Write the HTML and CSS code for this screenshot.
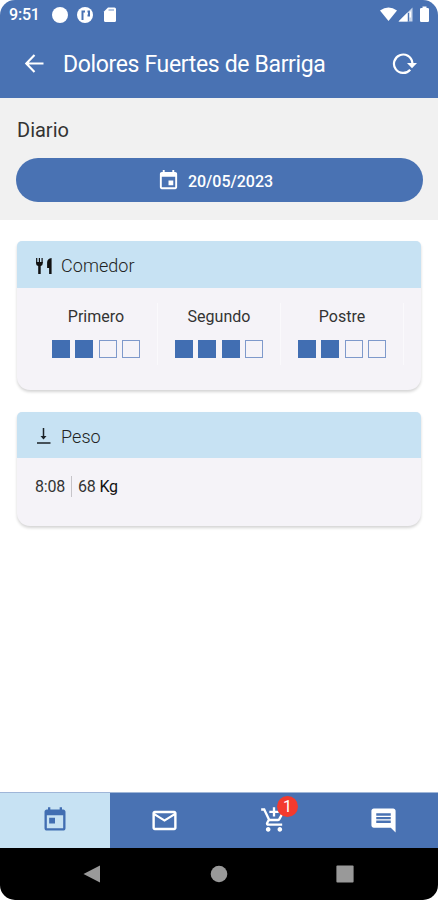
FILE: index.html
```html
<!DOCTYPE html>
<html lang="es">
<head>
<meta charset="utf-8">
<title>Diario</title>
<link rel="stylesheet" href="styles.css">
</head>
<body>
<div class="phone">
  <div class="status">
    <span class="clock">9:51</span>
    <svg class="notifications" width="70" height="18" viewBox="0 0 70 18" fill="#fff">
      <circle cx="10" cy="9" r="8"/>
      <circle cx="35" cy="9" r="8"/>
      <path d="M32.500 14V5.500H35M37.500 5.500h1.500v4h-1.500" fill="none" stroke="#4972b3" stroke-width="2"/>
      <path d="M58 1.500h6.500A1.500 1.500 0 0 1 66 3v11.500a1.500 1.500 0 0 1-1.500 1.500h-9a1.500 1.500 0 0 1-1.500-1.500V5.500z"/>
      <path d="M58.500 4h5.500" stroke="#9db5d8" stroke-width="1.300"/>
    </svg>
    <svg class="signals" width="54" height="18" viewBox="0 0 54 18" fill="#fff">
      <path d="M0 4.500Q8.500-1.500 17 4.500L8.500 15z"/>
      <path d="M18.500 15.500L32.500 1.500v14z" fill="#c6d3e9"/>
      <path d="M18.500 15.500L27.500 6.500v9zM29.500 5.500h1.500v6h-1.500z"/>
      <path d="M28.500 7v8.500" stroke="#4972b3" stroke-width="1.200"/>
      <path d="M42.500 2V.5h4V2H47.800A1.200 1.200 0 0 1 49 3.200v11.600a1.200 1.200 0 0 1-1.200 1.200h-6.600a1.200 1.200 0 0 1-1.200-1.200V3.200A1.200 1.200 0 0 1 41.200 2z"/>
    </svg>
  </div>
  <header class="appbar">
    <svg class="back" width="27" height="27" viewBox="0 0 24 24"><path d="M20 12H5M12 4.500L4.700 12l7.300 7.500" fill="none" stroke="#fff" stroke-width="1.900"/></svg>
    <h1>Dolores Fuertes de Barriga</h1>
    <svg class="refresh" width="26" height="24" viewBox="0 0 26 24"><path d="M18.200 17.700A9.200 9.200 0 1 1 20.300 10.500V12" fill="none" stroke="#fff" stroke-width="2.200"/><path d="M15 11h10L20 16.300z" fill="#fff"/></svg>
  </header>
  <section class="day">
    <h2>Diario</h2>
    <button class="date">
      <svg width="23" height="23" viewBox="0 0 24 24" fill="#fff"><path d="M17 12h-5v5h5v-5zM16 1v2H8V1H6v2H5c-1.110 0-1.990.9-1.990 2L3 19c0 1.100.89 2 2 2h14c1.100 0 2-.9 2-2V5c0-1.100-.9-2-2-2h-1V1h-2zm3 18H5V8h14v11z"/></svg>
      <span>20/05/2023</span>
    </button>
  </section>
  <main>
    <article class="card meals">
      <h3>
        <svg width="18" height="18" viewBox="0 0 18 18"><path d="M1.700 1v5M4.400 1v5M7.100 1v5" stroke="#111" stroke-width="1.200"/><path d="M1.100 5h6.600v1.700Q7.700 8.400 5.700 9v8H3.200V9Q1.100 8.400 1.100 6.700zM16.600 1v16h-2.500v-6h-2V5.500Q12.100 1.500 16.600 1z" fill="#111"/></svg>
        <span>Comedor</span>
      </h3>
      <div class="dishes">
        <div class="dish"><span>Primero</span><div class="marks"><i class="on"></i><i class="on"></i><i></i><i></i></div></div>
        <div class="dish"><span>Segundo</span><div class="marks"><i class="on"></i><i class="on"></i><i class="on"></i><i></i></div></div>
        <div class="dish"><span>Postre</span><div class="marks"><i class="on"></i><i class="on"></i><i></i><i></i></div></div>
      </div>
    </article>
    <article class="card weight">
      <h3>
        <svg width="18" height="18" viewBox="0 0 18 18"><path d="M8.500 1v10M2 16h13.500" stroke="#1b2227" stroke-width="1.500"/><path d="M5.500 9h6l-3 3.500z" fill="#1b2227"/></svg>
        <span>Peso</span>
      </h3>
      <p><span class="time">8:08</span><span class="amount">68 <b>Kg</b></span></p>
    </article>
  </main>
  <nav class="tabs">
    <a class="active"><svg width="28" height="28" viewBox="0 0 24 24"><path d="M19 3h-1V1h-2v2H8V1H6v2H5c-1.110 0-1.990.9-1.990 2L3 19c0 1.100.89 2 2 2h14c1.100 0 2-.9 2-2V5c0-1.100-.9-2-2-2zm0 16H5V8h14v11zM7 10h5v5H7z"/></svg></a>
    <a><svg width="29" height="29" viewBox="0 0 24 24"><path d="M22 6c0-1.100-.9-2-2-2H4c-1.100 0-2 .9-2 2v12c0 1.100.9 2 2 2h16c1.100 0 2-.9 2-2V6zm-2 0l-8 5-8-5h16zm0 12H4V8l8 5 8-5v10z"/></svg></a>
    <a><svg width="28" height="28" viewBox="0 0 24 24"><path d="M11 9h2V6h3V4h-3V1h-2v3H8v2h3v3zm-4 9c-1.100 0-1.990.9-1.990 2S5.900 22 7 22s2-.9 2-2-.9-2-2-2zm10 0c-1.100 0-1.990.9-1.990 2s.89 2 1.990 2 2-.9 2-2-.9-2-2-2zm-9.830-3.250l.03-.12.9-1.630h7.450c.75 0 1.410-.41 1.750-1.030l3.860-7.010L19.420 4h-.01l-1.100 2-2.760 5H8.530l-.13-.27L6.160 6l-.95-2-.94-2H1v2h2l3.600 7.590-1.350 2.450c-.16.28-.25.61-.25.960 0 1.100.9 2 2 2h12v-2H7.420c-.13 0-.25-.11-.25-.25z"/></svg><span class="badge">1</span></a>
    <a><svg width="29" height="29" viewBox="0 0 24 24"><path d="M20 2H4c-1.100 0-2 .9-2 2v12c0 1.100.9 2 2 2h14l4 4V4c0-1.100-.9-2-2-2zm-2 12H6v-2h12v2zm0-3H6V9h12v2zm0-3H6V6h12v2z"/></svg></a>
  </nav>
  <div class="system">
    <svg width="18" height="18" viewBox="0 0 18 18"><path d="M.5 9L17 .5v17z"/></svg>
    <svg width="18" height="18" viewBox="0 0 18 18"><circle cx="9" cy="9" r="8.300"/></svg>
    <svg width="18" height="18" viewBox="0 0 18 18"><rect x=".4" y=".4" width="17.200" height="17.200" rx="1"/></svg>
  </div>
</div>
</body>
</html>
```
FILE: styles.css
```css
* { box-sizing: border-box; }
body { margin: 0; background: #fff; font-family: Roboto, sans-serif; color: #333; }
h1, h2, h3, p { margin: 0; font-weight: 400; }
svg { display: block; flex: none; }
.phone { width: 438px; height: 900px; display: flex; flex-direction: column; border-radius: 15px; overflow: hidden; background: #fff; }
.status { height: 29px; background: #4972b3; display: flex; align-items: center; padding: 0 4px 0 9px; color: #fff; }
.clock { font-size: 16px; font-weight: 500; width: 41px; letter-spacing: -0.2px; }
.signals { margin-left: auto; }
.appbar { height: 69px; background: #4972b3; display: flex; align-items: center; padding: 0 20px 0 21px; color: #fff; }
.appbar h1 { font-size: 23px; letter-spacing: -.35px; margin-left: 15px; padding-top: 2px; line-height: 30px; }
.refresh { margin-left: auto; }
.day { height: 122px; background: #f1f1f1; padding: 19px 15px 0 16px; }
.day h2 { font-size: 20px; line-height: 26px; padding-left: 1px; }
.date { width: 100%; height: 44px; margin-top: 15px; border: 0; border-radius: 22px; background: #4972b3; color: #fff; display: flex; align-items: center; justify-content: center; gap: 8px; padding: 1px 6px 0 0; font: 500 16px Roboto, sans-serif; }
.date span { padding: 2px 3px 0 0; }
main { flex: 1; padding: 21px 17px 0; display: flex; flex-direction: column; gap: 22px; }
.card { border-radius: 5px 5px 13px 13px; background: #f5f3f8; box-shadow: 0 2px 3px rgba(0,0,0,.17); overflow: hidden; }
.card h3 { height: 47px; background: #c7e2f3; display: flex; align-items: center; gap: 8px; padding: 2px 0 0 18px; font-size: 18px; font-weight: 300; color: #222; letter-spacing: .05px; }
.meals { height: 149px; }
.weight { height: 114px; }
.card.weight h3 { height: 46px; }
.dishes { display: flex; padding: 15px 17px 0 18px; }
.dish { flex: 1; height: 62px; display: flex; flex-direction: column; align-items: center; border-right: 1px solid #faf9fc; font-size: 16px; letter-spacing: 0; line-height: 28px; }
.marks { display: flex; gap: 5.500px; margin-top: 9px; }
.marks i { width: 18px; height: 18px; border: 1px solid #7e99cb; }
.marks .on { background: #416eb2; border-color: #416eb2; }
.weight p { display: flex; padding: 18px 18px 0; font-size: 16px; line-height: 21px; letter-spacing: -.2px; }
.weight b { color: #111; font-weight: 400; }
.time { padding-right: 6px; border-right: 1px solid #c6c4c9; }
.amount { padding-left: 6px; }
.tabs { height: 56px; display: flex; border-top: 1px solid #9fb6d8; background: #4972b3; }
.tabs a { flex: 1; position: relative; display: flex; justify-content: center; padding-top: 13px; fill: #fff; }
.tabs .active { background: #c7e2f3; fill: #416eb2; }
.badge { position: absolute; left: 58px; top: 3px; width: 21px; height: 21px; border-radius: 50%; background: #f33a2e; color: #fff; font-size: 16px; line-height: 21px; text-align: center; }
.system { height: 52px; background: #000; fill: #999; display: flex; justify-content: space-between; align-items: center; padding: 0 84px 0 83px; }
```
